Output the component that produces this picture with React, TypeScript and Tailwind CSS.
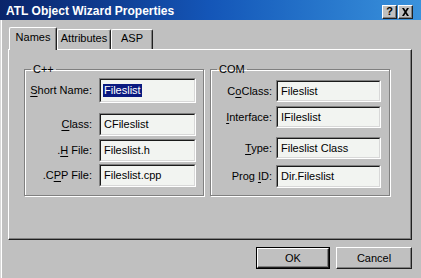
import React from "react";

const font = { fontFamily: '"Liberation Sans", Arial, sans-serif' };

// access-key underline helper
function Key({ children }: { children: React.ReactNode }) {
  return <span className="underline underline-offset-[2px]">{children}</span>;
}

function Field({
  value,
  h,
  selected,
  w,
}: {
  value: string;
  h: string;
  selected?: boolean;
  w: string;
}) {
  return (
    <div
      className={`${w} ${h} shrink-0 border border-t-[#808080] border-l-[#808080] border-b-white border-r-white`}
    >
      <div className="h-full border border-t-[#1a1a1a] border-l-[#1a1a1a] border-b-[#d8d8d8] border-r-[#d8d8d8] bg-[#f2f4f1] flex items-center pl-[2px]">
        <span
          className={`text-[11px] leading-[13px] px-[1px] ${
            selected ? "bg-[#0a1a80] text-white" : "text-black"
          }`}
        >
          {value}
        </span>
      </div>
    </div>
  );
}

function Row({
  label,
  value,
  labelW,
  fieldW,
  h,
  mt,
  gap,
  selected,
}: {
  label: React.ReactNode;
  value: string;
  labelW: string;
  fieldW: string;
  h: string;
  mt: string;
  gap: string;
  selected?: boolean;
}) {
  return (
    <div className={`flex items-center ${mt} ${gap}`}>
      <div className={`${labelW} text-right text-[11px] leading-[13px] text-black`}>{label}</div>
      <Field value={value} h={h} w={fieldW} selected={selected} />
    </div>
  );
}

function Group({ title, children }: { title: string; children: React.ReactNode }) {
  return (
    <fieldset className="w-[180px] h-[133px] border border-[#808080] shadow-[inset_1px_1px_0_#fff,1px_1px_0_#fff]">
      <legend className="ml-[6px] px-[2px] text-[11px] leading-[13px] text-black">{title}</legend>
      {children}
    </fieldset>
  );
}

function Tab({ label, w, active }: { label: string; w: string; active?: boolean }) {
  return (
    <div
      className={`${w} flex items-center justify-center text-[11px] leading-[13px] text-black bg-[#c0c0c0] rounded-t-[2px] border-t border-l border-t-white border-l-white border-r border-r-[#202020] shadow-[inset_-1px_0_0_#808080] ${
        active ? "h-[23px] pb-[4px] relative z-10" : "h-[20px] mb-px pb-[2px]"
      }`}
    >
      {label}
    </div>
  );
}

function Button({ label, w, isDefault }: { label: string; w: string; isDefault?: boolean }) {
  return (
    <div className={`${w} h-[22px] ${isDefault ? "border border-black" : ""}`}>
      <div className="h-full border border-t-white border-l-white border-b-[#202020] border-r-[#202020] shadow-[inset_-1px_-1px_0_#808080] flex items-center justify-center text-[11px] leading-[13px] text-black">
        {label}
      </div>
    </div>
  );
}

function CaptionButton({ children }: { children: React.ReactNode }) {
  return (
    <div className="w-[15px] h-[14px] bg-[#c0c0c0] border border-t-white border-l-white border-b-[#202020] border-r-[#202020] shadow-[inset_-1px_-1px_0_#808080] flex items-center justify-center">
      {children}
    </div>
  );
}

export default function App() {
  return (
    <div className="w-[421px] h-[278px] bg-[#c0c0c0] overflow-hidden flex flex-col" style={font}>
      {/* Title bar */}
      <div className="h-[20px] shrink-0 bg-linear-to-r from-[#0a246a] via-[#1456b8] to-[#3a92dc] flex items-center pl-[6px] pr-[8px]">
        <span className="text-white font-bold text-[12px] leading-[14px] pt-[2px]">ATL Object Wizard Properties</span>
        <div className="ml-auto flex gap-[1px] pt-[3px]">
          <CaptionButton>
            <span className="text-[11px] font-bold leading-[11px] text-black">?</span>
          </CaptionButton>
          <CaptionButton>
            <svg width="9" height="8" viewBox="0 0 9 8">
              <path d="M1 0h2l1.5 2.5L6 0h2L5.5 4 8 8H6L4.5 5.5 3 8H1l2.5-4z" fill="#000" />
            </svg>
          </CaptionButton>
        </div>
      </div>

      {/* Body */}
      <div className="flex-1 flex flex-col pl-[7px] pr-[9px] border-l border-l-[#d8d8d8] shadow-[inset_1px_0_0_#fff]">
        {/* Tabs */}
        <div className="flex items-end pt-[7px] pl-[1px] -mb-px">
          <Tab label="Names" w="w-[48px]" active />
          <Tab label="Attributes" w="w-[54px]" />
          <Tab label="ASP" w="w-[42px]" />
        </div>

        {/* Tab panel */}
        <div className="w-[404px] h-[191px] border border-t-white border-l-white border-b-[#202020] border-r-[#202020] shadow-[inset_-1px_-1px_0_#808080] flex gap-[6px] pl-[15px] pt-[13px]">
          <Group title="C++">
            <div className="flex flex-col">
              <Row
                label={<><Key>S</Key>hort Name:</>}
                value="Fileslist"
                labelW="w-[67px]"
                fieldW="w-[97px]"
                h="h-[25px]"
                mt="mt-[2px]"
                gap="gap-[7px]"
                selected
              />
              <Row
                label={<><Key>C</Key>lass:</>}
                value="CFileslist"
                labelW="w-[67px]"
                fieldW="w-[97px]"
                h="h-[23px]"
                mt="mt-[10px]"
                gap="gap-[7px]"
              />
              <Row
                label={<>.<Key>H</Key> File:</>}
                value="Fileslist.h"
                labelW="w-[67px]"
                fieldW="w-[97px]"
                h="h-[23px]"
                mt="mt-[3px]"
                gap="gap-[7px]"
              />
              <Row
                label={<>.C<Key>P</Key>P File:</>}
                value="Fileslist.cpp"
                labelW="w-[67px]"
                fieldW="w-[97px]"
                h="h-[23px]"
                mt="mt-[2px]"
                gap="gap-[7px]"
              />
            </div>
          </Group>
          <Group title="COM">
            <div className="flex flex-col">
              <Row
                label={<>C<Key>o</Key>Class:</>}
                value="Fileslist"
                labelW="w-[61px]"
                fieldW="w-[105px]"
                h="h-[22px]"
                mt="mt-[4px]"
                gap="gap-[4px]"
              />
              <Row
                label={<><Key>I</Key>nterface:</>}
                value="IFileslist"
                labelW="w-[61px]"
                fieldW="w-[105px]"
                h="h-[22px]"
                mt="mt-[4px]"
                gap="gap-[4px]"
              />
              <Row
                label={<><Key>T</Key>ype:</>}
                value="Fileslist Class"
                labelW="w-[61px]"
                fieldW="w-[105px]"
                h="h-[22px]"
                mt="mt-[9px]"
                gap="gap-[4px]"
              />
              <Row
                label={<>Prog <Key>I</Key>D:</>}
                value="Dir.Fileslist"
                labelW="w-[61px]"
                fieldW="w-[105px]"
                h="h-[23px]"
                mt="mt-[6px]"
                gap="gap-[4px]"
              />
            </div>
          </Group>
        </div>

        {/* Buttons */}
        <div className="flex justify-end gap-[6px] mt-[7px]">
          <Button label="OK" w="w-[74px]" isDefault />
          <Button label="Cancel" w="w-[76px]" />
        </div>
      </div>
    </div>
  );
}
